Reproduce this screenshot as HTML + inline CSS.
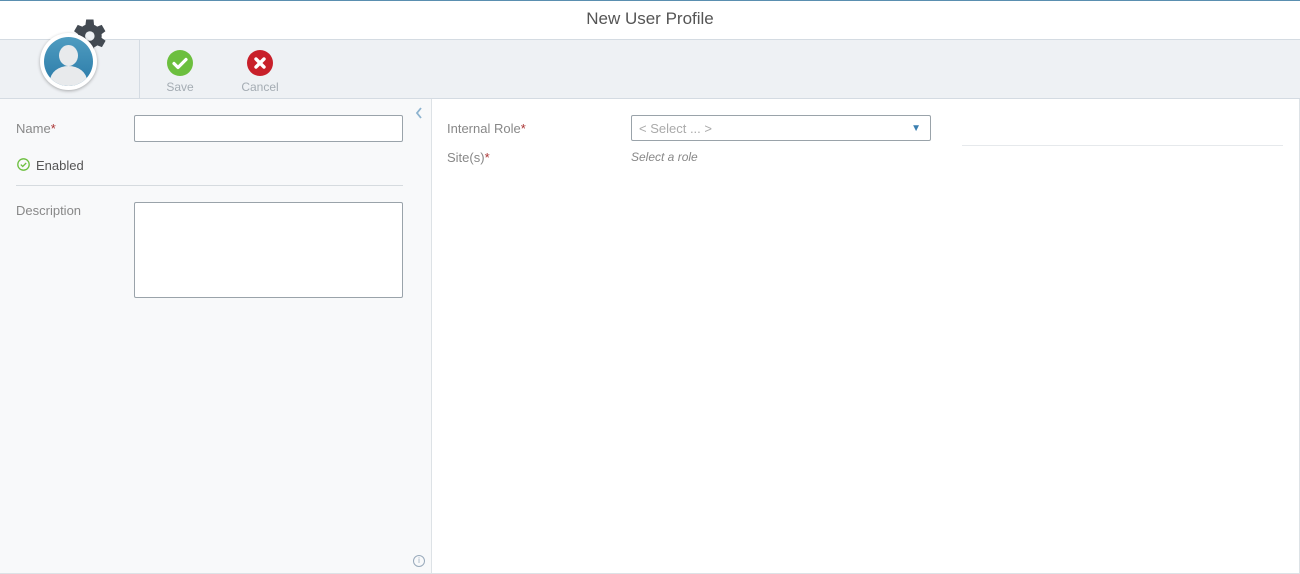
<!DOCTYPE html>
<html><head><style>
*{box-sizing:border-box;margin:0;padding:0}
body{width:1300px;height:574px;background:#fff;font-family:"Liberation Sans",sans-serif;position:relative;overflow:hidden}
.abs{position:absolute}
.lbl{font-size:13px;color:#888}
.req{color:#a33}
</style></head><body>
<div class="abs" style="left:0;top:0;width:1300px;height:1px;background:#5a8fb0"></div>
<div class="abs" style="left:0;top:9px;width:1300px;text-align:center;font-size:17px;color:#555">New User Profile</div>
<div class="abs" style="left:0;top:39px;width:1300px;height:60px;background:#eef1f4;border-top:1px solid #d4dbe2;border-bottom:1px solid #d4dbe2"></div>
<div class="abs" style="left:139px;top:40px;width:1px;height:58px;background:#d4dbe2"></div>
<svg class="abs" style="left:66px;top:14px" width="44" height="44" viewBox="0 0 24 24"><path fill="#434a52" d="M19.4 13a7.5 7.5 0 000-2l2.1-1.6-2-3.5-2.5 1a7 7 0 00-1.7-1L15 3h-4l-.4 2.9a7 7 0 00-1.7 1l-2.5-1-2 3.5L6.6 11a7.5 7.5 0 000 2l-2.1 1.6 2 3.5 2.5-1a7 7 0 001.7 1L11 21h4l.4-2.9a7 7 0 001.7-1l2.5 1 2-3.5z"/><circle cx="13" cy="12" r="2.6" fill="#eef1f4"/></svg>
<div class="abs" style="left:40px;top:33px;width:57px;height:57px;border-radius:50%;background:#fff;box-shadow:0 1px 3px rgba(0,0,0,.3)"></div>
<div class="abs" style="left:44px;top:37px;width:49px;height:49px;border-radius:50%;background:linear-gradient(#4f9cc0,#2a7aa8);overflow:hidden">
<div class="abs" style="left:15px;top:8px;width:19px;height:21px;border-radius:50%;background:#e8eaec"></div>
<div class="abs" style="left:6px;top:29px;width:37px;height:30px;border-radius:50% 50% 0 0;background:#e8eaec"></div></div>
<svg class="abs" style="left:167px;top:50px" width="26" height="26" viewBox="0 0 26 26"><circle cx="13" cy="13" r="13" fill="#6cbf3e"/><path d="M7 13.5l4 4 8-8" stroke="#fff" stroke-width="3.2" fill="none" stroke-linecap="round" stroke-linejoin="round"/></svg>
<div class="abs" style="left:160px;top:80px;width:40px;text-align:center;font-size:12px;color:#a4acb3">Save</div>
<svg class="abs" style="left:247px;top:50px" width="26" height="26" viewBox="0 0 26 26"><circle cx="13" cy="13" r="13" fill="#c8202a"/><path d="M9 9l8 8M17 9l-8 8" stroke="#fff" stroke-width="3.4" stroke-linecap="round"/></svg>
<div class="abs" style="left:238px;top:80px;width:44px;text-align:center;font-size:12px;color:#a4acb3">Cancel</div>
<div class="abs" style="left:0;top:99px;width:432px;height:475px;background:#f8f9fa;border-right:1px solid #dde2e6"></div>
<div class="abs" style="left:1299px;top:99px;width:1px;height:475px;background:#dde2e6"></div>
<div class="abs" style="left:0;top:573px;width:1300px;height:1px;background:#dde2e6"></div>
<svg class="abs" style="left:415px;top:107px" width="8" height="12"><path d="M6 1L2 6l4 5" stroke="#8db3cf" stroke-width="1.8" fill="none"/></svg>
<div class="abs lbl" style="left:16px;top:121px">Name<span class="req">*</span></div>
<div class="abs" style="left:134px;top:115px;width:269px;height:27px;border:1px solid #9aa3aa;border-radius:2px;background:#fff"></div>
<svg class="abs" style="left:17px;top:158px" width="13" height="13" viewBox="0 0 13 13"><circle cx="6.5" cy="6.5" r="5.7" stroke="#6cbf3e" stroke-width="1.3" fill="none"/><path d="M3.8 6.6l1.9 1.9 3.5-3.5" stroke="#6cbf3e" stroke-width="1.3" fill="none"/></svg>
<div class="abs" style="left:36px;top:158px;font-size:13px;color:#555">Enabled</div>
<div class="abs" style="left:16px;top:185px;width:387px;height:1px;background:#d6dbdf"></div>
<div class="abs lbl" style="left:16px;top:203px">Description</div>
<div class="abs" style="left:134px;top:202px;width:269px;height:96px;border:1px solid #9aa3aa;border-radius:2px;background:#fff"></div>
<div class="abs" style="left:413px;top:555px;width:12px;height:12px;border:1px solid #9ab;border-radius:50%;font-size:8px;color:#9ab;text-align:center;line-height:10px">i</div>
<div class="abs lbl" style="left:447px;top:121px">Internal Role<span class="req">*</span></div>
<div class="abs" style="left:631px;top:115px;width:300px;height:26px;border:1px solid #9aa3aa;border-radius:2px;background:#fff;font-size:13px;color:#aaa;padding:5px 7px">&lt; Select ... &gt;<span style="position:absolute;right:9px;top:7px;color:#3b7fb0;font-size:10px">▼</span></div>
<div class="abs lbl" style="left:447px;top:150px">Site(s)<span class="req">*</span></div>
<div class="abs" style="left:631px;top:150px;font-size:12px;color:#888;font-style:italic">Select a role</div>
<div class="abs" style="left:962px;top:145px;width:321px;height:1px;background:#e6e9ec"></div>
</body></html>
